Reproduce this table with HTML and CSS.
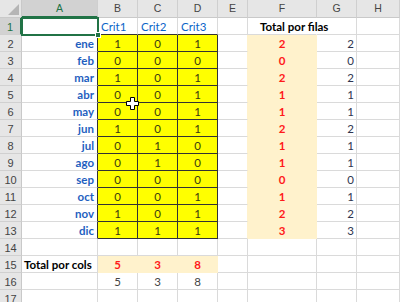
FILE: index.html
```html
<!DOCTYPE html>
<html>
<head>
<meta charset="utf-8">
<link rel="stylesheet" href="styles.css">
</head>
<body>
<div class="wrap">
<div class="sheet">
  <div class="corner"><span class="tri"></span></div>
  <div class="ch sel">A</div><div class="ch">B</div><div class="ch">C</div><div class="ch">D</div><div class="ch">E</div><div class="ch">F</div><div class="ch">G</div><div class="ch">H</div>

  <div class="rh sel">1</div><div class="c"></div><div class="c crit">Crit1</div><div class="c crit">Crit2</div><div class="c crit">Crit3</div><div class="c"></div><div class="c ttl over">Total por filas</div><div class="c"></div><div class="c"></div>

  <div class="rh">2</div><div class="c mon">ene</div><div class="y">1</div><div class="y">0</div><div class="y">1</div><div class="c ef"></div><div class="f">2</div><div class="c g">2</div><div class="c"></div>
  <div class="rh">3</div><div class="c mon">feb</div><div class="y">0</div><div class="y">0</div><div class="y">0</div><div class="c ef"></div><div class="f">0</div><div class="c g">0</div><div class="c"></div>
  <div class="rh">4</div><div class="c mon">mar</div><div class="y">1</div><div class="y">0</div><div class="y">1</div><div class="c ef"></div><div class="f">2</div><div class="c g">2</div><div class="c"></div>
  <div class="rh">5</div><div class="c mon">abr</div><div class="y">0</div><div class="y">0</div><div class="y">1</div><div class="c ef"></div><div class="f">1</div><div class="c g">1</div><div class="c"></div>
  <div class="rh">6</div><div class="c mon">may</div><div class="y">0</div><div class="y">0</div><div class="y">1</div><div class="c ef"></div><div class="f">1</div><div class="c g">1</div><div class="c"></div>
  <div class="rh">7</div><div class="c mon">jun</div><div class="y">1</div><div class="y">0</div><div class="y">1</div><div class="c ef"></div><div class="f">2</div><div class="c g">2</div><div class="c"></div>
  <div class="rh">8</div><div class="c mon">jul</div><div class="y">0</div><div class="y">1</div><div class="y">0</div><div class="c ef"></div><div class="f">1</div><div class="c g">1</div><div class="c"></div>
  <div class="rh">9</div><div class="c mon">ago</div><div class="y">0</div><div class="y">1</div><div class="y">0</div><div class="c ef"></div><div class="f">1</div><div class="c g">1</div><div class="c"></div>
  <div class="rh">10</div><div class="c mon">sep</div><div class="y">0</div><div class="y">0</div><div class="y">0</div><div class="c ef"></div><div class="f">0</div><div class="c g">0</div><div class="c"></div>
  <div class="rh">11</div><div class="c mon">oct</div><div class="y">0</div><div class="y">0</div><div class="y">1</div><div class="c ef"></div><div class="f">1</div><div class="c g">1</div><div class="c"></div>
  <div class="rh">12</div><div class="c mon">nov</div><div class="y">1</div><div class="y">0</div><div class="y">1</div><div class="c ef"></div><div class="f">2</div><div class="c g">2</div><div class="c"></div>
  <div class="rh">13</div><div class="c mon">dic</div><div class="y">1</div><div class="y">1</div><div class="y">1</div><div class="c ef"></div><div class="f">3</div><div class="c g">3</div><div class="c"></div>

  <div class="rh">14</div><div class="c"></div><div class="c"></div><div class="c"></div><div class="c"></div><div class="c"></div><div class="c"></div><div class="c"></div><div class="c"></div>
  <div class="rh">15</div><div class="c ttl">Total por cols</div><div class="f">5</div><div class="f">3</div><div class="f">8</div><div class="c"></div><div class="c"></div><div class="c"></div><div class="c"></div>
  <div class="rh">16</div><div class="c"></div><div class="c v">5</div><div class="c v">3</div><div class="c v">8</div><div class="c"></div><div class="c"></div><div class="c"></div><div class="c"></div>
  <div class="rh">17</div><div class="c"></div><div class="c"></div><div class="c"></div><div class="c"></div><div class="c"></div><div class="c"></div><div class="c"></div><div class="c"></div>
</div>
<div class="selbox"><span class="handle"></span></div>
<svg class="cursor" width="13" height="13" viewBox="0 0 13 13">
  <path d="M4.5 0.5 H8.5 V4.5 H12.5 V8.5 H8.5 V12.5 H4.5 V8.5 H0.5 V4.5 H4.5 Z" fill="#fff" stroke="#000" stroke-width="1"/>
</svg>
</div>
</body>
</html>
```
FILE: styles.css
```css
* { box-sizing: border-box; }
html, body { margin: 0; padding: 0; background: #fff; }
body { width: 400px; height: 302px; overflow: hidden; }
.wrap { position: relative; width: 400px; height: 302px; overflow: hidden; }
.sheet {
  display: grid;
  grid-template-columns: 22px 76px 40px 40px 40px 30px 69px 40px 1fr;
  grid-template-rows: 18px repeat(17, 17px);
  font-family: Lato, "Liberation Sans", sans-serif;
  font-size: 11.5px;
}
.sheet > div { line-height: 16px; white-space: nowrap; overflow: hidden; }
.corner { background: #e6e6e6; border-right: 1px solid #c9c9c9; border-bottom: 1px solid #c9c9c9; position: relative; }
.tri { position: absolute; right: 2px; bottom: 2px; width: 0; height: 0; border-left: 11px solid transparent; border-bottom: 11px solid #b5b5b5; }
.ch { background: #e6e6e6; color: #444; text-align: center; border-right: 1px solid #cfcfcf; border-bottom: 1px solid #c9c9c9; font-family: "Liberation Sans", sans-serif; font-size: 10.5px; line-height: 17px !important; }
.ch.sel { background: #d2d2d2; color: #217346; border-bottom: 2px solid #217346; }
.rh { background: #e6e6e6; color: #444; text-align: center; border-right: 1px solid #c9c9c9; border-bottom: 1px solid #d0d0d0; font-family: "Liberation Sans", sans-serif; font-size: 11px; padding-top: 1px; }
.rh.sel { background: #d2d2d2; color: #217346; border-right: 2px solid #217346; }
.c { border-right: 1px solid #dadada; border-bottom: 1px solid #dadada; padding-top: 1px; }
.crit { color: #0a64c8; padding-left: 3px; border-bottom-color: #333; }
.mon { color: #1f5fbf; font-weight: bold; text-align: right; padding-right: 3px; border-right-color: #333; }
.y { background: #ffff00; color: #3a3a10; text-align: center; border-right: 1px solid #333; border-bottom: 1px solid #333; padding-top: 1px; }
.f { background: #fff2cc; color: #ff1a1a; font-weight: bold; text-align: center; border-right: 1px solid #fff2cc; border-bottom: 1px solid #fff2cc; padding-top: 1px; }
.ef { border-right-color: #fff2cc; }
.g { color: #2f3550; text-align: right; padding-right: 2px; }
.v { color: #444; text-align: center; }
.ttl { color: #000; font-weight: bold; padding-left: 2px; }
.sheet > .over { overflow: visible; padding-left: 12px; border-right-color: transparent; position: relative; z-index: 1; }
.selbox { position: absolute; left: 21px; top: 17px; width: 78px; height: 19px; border: 2px solid #217346; }
.handle { position: absolute; right: -4px; bottom: -4px; width: 6px; height: 6px; background: #217346; border: 1px solid #fff; }
.cursor { position: absolute; left: 126px; top: 97px; }
```
